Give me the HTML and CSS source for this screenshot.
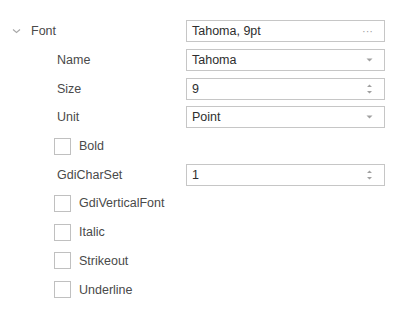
FILE: index.html
```html
<!DOCTYPE html>
<html lang="en">

<head>
    <meta charset="UTF-8">
    <meta name="viewport" content="width=device-width, initial-scale=1.0">
    <title>Font properties</title>
    <link rel="stylesheet" href="styles.css">
</head>

<body>
    <div class="grid">
        <div class="row">
            <div class="label top">
                <svg class="chevron" width="9" height="6" viewBox="0 0 9 6"><path d="M1 1.5 L4.5 4.5 L8 1.5" fill="none" stroke="#a8a8a8" stroke-width="1.1"/></svg>
                Font
            </div>
            <div class="editor">
                <span>Tahoma, 9pt</span>
                <span class="dots">&middot;&middot;&middot;</span>
            </div>
        </div>

        <div class="row">
            <div class="label">Name</div>
            <div class="editor">
                <span>Tahoma</span>
                <svg class="arrow" width="7" height="4" viewBox="0 0 7 4"><path d="M0.5 0.5 H6.5 L3.5 3.5 Z" fill="#a0a0a0"/></svg>
            </div>
        </div>

        <div class="row">
            <div class="label">Size</div>
            <div class="editor">
                <span>9</span>
                <svg class="spin" width="7" height="12" viewBox="0 0 7 12"><path d="M1 4 H6 L3.5 1.5 Z M1 8 H6 L3.5 10.5 Z" fill="#a0a0a0"/></svg>
            </div>
        </div>

        <div class="row">
            <div class="label">Unit</div>
            <div class="editor">
                <span>Point</span>
                <svg class="arrow" width="7" height="4" viewBox="0 0 7 4"><path d="M0.5 0.5 H6.5 L3.5 3.5 Z" fill="#a0a0a0"/></svg>
            </div>
        </div>

        <div class="row">
            <label class="check"><span class="box"></span>Bold</label>
        </div>

        <div class="row">
            <div class="label">GdiCharSet</div>
            <div class="editor">
                <span>1</span>
                <svg class="spin" width="7" height="12" viewBox="0 0 7 12"><path d="M1 4 H6 L3.5 1.5 Z M1 8 H6 L3.5 10.5 Z" fill="#a0a0a0"/></svg>
            </div>
        </div>

        <div class="row">
            <label class="check"><span class="box"></span>GdiVerticalFont</label>
        </div>
        <div class="row">
            <label class="check"><span class="box"></span>Italic</label>
        </div>
        <div class="row">
            <label class="check"><span class="box"></span>Strikeout</label>
        </div>
        <div class="row">
            <label class="check"><span class="box"></span>Underline</label>
        </div>
    </div>
</body>

</html>
```

FILE: styles.css
```css
* {
    margin: 0;
    padding: 0;
    box-sizing: border-box;
    font-family: "Liberation Sans", Arial, sans-serif;
}

body {
    background-color: #fff;
    color: #4a4a4a;
    font-size: 12.5px;
}

.grid {
    padding: 17px 16px 0 0;
}

.row {
    display: grid;
    grid-template-columns: 186px 199px;
    align-items: center;
    height: 28.7px;
}

.label {
    padding-left: 57px;
}

.label.top {
    display: flex;
    align-items: center;
    padding-left: 12px;
}

.chevron {
    margin-right: 10px;
}

.editor {
    display: flex;
    align-items: center;
    justify-content: space-between;
    height: 22px;
    padding: 0 11px 0 5px;
    border: 1px solid #c6c6c6;
    color: #2e2e2e;
}

.dots {
    color: #a0a0a0;
    font-size: 11px;
}

.check {
    display: flex;
    align-items: center;
    padding-left: 54px;
    grid-column: 1 / 3;
}

.box {
    width: 17px;
    height: 17px;
    border: 1px solid #c0c0c0;
    background-color: #fff;
    margin-right: 8px;
}
```
